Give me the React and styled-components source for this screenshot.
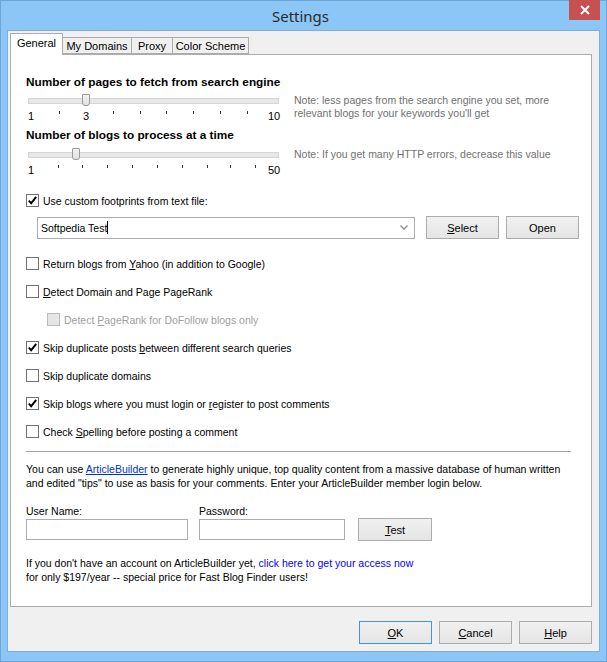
import React from 'react';
import styled, { createGlobalStyle } from 'styled-components';

const Global = createGlobalStyle`
  html, body { margin: 0; padding: 0; background: #fff; }
  body { font-family: "Liberation Sans", Arial, sans-serif; font-size: 10.5px; color: #000; }
  * { box-sizing: border-box; }
`;

const Window = styled.div`
  width: 607px;
  height: 662px;
  background: #8bc6f7;
  border: 1px solid #6ea5d8;
  display: flex;
  flex-direction: column;
`;

const TitleBar = styled.div`
  height: 29px;
  flex: none;
  display: grid;
  grid-template-columns: 1fr auto 1fr;
  align-items: start;
  padding-right: 6px;
`;

const Title = styled.div`
  grid-column: 2;
  font-family: "Noto Sans", "Open Sans", sans-serif;
  font-size: 15px;
  line-height: 30px;
  color: #2b2b2b;
`;

const CloseBtn = styled.div`
  grid-column: 3;
  justify-self: end;
  width: 31px;
  height: 20px;
  margin-top: -1px;
  background: #c75050;
  display: flex;
  align-items: center;
  justify-content: center;
`;

const Client = styled.div`
  flex: 1;
  margin: 0 6px 9px 6px;
  background: #f0f0f0;
  border: 1px solid #7eaedc;
  display: flex;
  flex-direction: column;
  padding: 2px 7px 0 2px;
`;

const TabStrip = styled.div`
  height: 21px;
  flex: none;
  display: flex;
  align-items: flex-end;
`;

const Tab = styled.div`
  position: relative;
  z-index: ${p => (p.$active ? 2 : 1)};
  width: ${p => p.$w}px;
  height: ${p => (p.$active ? 22 : 17)}px;
  margin-bottom: ${p => (p.$active ? -1 : 0)}px;
  margin-left: ${p => (p.$first ? 0 : -1)}px;
  background: ${p => (p.$active ? '#fff' : '#f0f0f0')};
  border: 1px solid #acacac;
  border-bottom: ${p => (p.$active ? 'none' : '1px solid #acacac')};
  display: flex;
  align-items: center;
  justify-content: center;
  padding-bottom: ${p => (p.$active ? 3 : 0)}px;
  font-size: 11px;
  white-space: nowrap;
`;

const Panel = styled.div`
  flex: 1;
  background: #fff;
  border: 1px solid #acacac;
  display: flex;
  flex-direction: column;
  padding: 0 8px 0 15px;
`;

const Heading = styled.div`
  font-weight: bold;
  font-size: 11.8px;
  line-height: 13px;
  margin-top: ${p => p.$mt}px;
`;

const SliderRow = styled.div`
  display: grid;
  grid-template-columns: 256px 1fr;
  column-gap: 12px;
  margin-top: ${p => p.$mt}px;
`;

const SliderBox = styled.div`
  display: flex;
  flex-direction: column;
`;

const TrackArea = styled.div`
  position: relative;
  height: 14px;
`;

const Track = styled.div`
  position: absolute;
  left: 2px;
  right: 3px;
  top: 5px;
  height: 6px;
  background: #e7e7e7;
  border: 1px solid #d6d6d6;
`;

const Thumb = styled.div`
  position: absolute;
  top: 1px;
  width: 8px;
  height: 12px;
  margin-left: -4px;
  background: linear-gradient(#f0f0f0, #e3e3e3);
  border: 1px solid #9a9a9a;
  border-radius: 1px 1px 3px 3px;
`;

const Scale = styled.div`
  position: relative;
  height: 12px;
  margin-top: 3px;
`;

const Tick = styled.div`
  position: absolute;
  top: 1px;
  width: 1px;
  height: 3px;
  background: #333;
`;

const ScaleLabel = styled.div`
  position: absolute;
  top: 0;
  font-size: 11px;
  line-height: 12px;
  transform: translateX(-50%);
`;

const Note = styled.div`
  color: #707070;
  line-height: 13px;
  padding-top: 1px;
`;

const CheckRow = styled.label`
  display: flex;
  align-items: center;
  height: 13px;
  margin-left: ${p => p.$indent || 0}px;
  color: ${p => (p.$disabled ? '#a0a0a0' : '#000')};
  margin-top: ${p => p.$mt || 0}px;
`;

const Box = styled.span`
  width: 13px;
  height: 13px;
  flex: none;
  border: 1px solid ${p => (p.$disabled ? '#bcbcbc' : '#707070')};
  background: ${p => (p.$disabled ? '#e6e6e6' : '#fff')};
  margin-right: 4px;
  display: flex;
  align-items: center;
  justify-content: center;
`;

const CheckList = styled.div`
  display: flex;
  flex-direction: column;
  gap: 15px;
  margin-top: 18px;
`;

const ComboRow = styled.div`
  display: flex;
  align-items: center;
  margin-top: 9px;
  margin-left: 11px;
  gap: 7px;
`;

const Combo = styled.div`
  width: 378px;
  height: 22px;
  flex: none;
  border: 1px solid #acacac;
  background: #fff;
  display: flex;
  align-items: center;
  padding: 0 6px 0 3px;
  margin-right: 4px;
`;

const ComboText = styled.span`
  flex: 1;
  display: flex;
  align-items: center;
`;

const Caret = styled.span`
  display: inline-block;
  width: 1px;
  height: 13px;
  background: #000;
`;

const Btn = styled.div`
  width: ${p => p.$w || 73}px;
  height: 23px;
  flex: none;
  border: 1px solid ${p => (p.$focused ? '#3d95e3' : '#acacac')};
  background: linear-gradient(#f0f0f0, #e5e5e5);
  display: flex;
  align-items: center;
  justify-content: center;
  font-size: 11px;
  margin-bottom: ${p => p.$mb || 0}px;
`;

const Separator = styled.div`
  height: 1px;
  background: #a0a0a0;
  margin: 13px 12px 0 0;
`;

const Para = styled.p`
  margin: ${p => p.$mt}px 0 0 0;
  line-height: 14px;
`;

const Link = styled.span`
  color: ${p => (p.$underline ? '#0033cc' : '#0000ff')};
  text-decoration: ${p => (p.$underline ? 'underline' : 'none')};
`;

const FieldsRow = styled.div`
  display: flex;
  align-items: flex-end;
  margin-top: 15px;
`;

const Field = styled.div`
  display: flex;
  flex-direction: column;
  gap: 1px;
  width: ${p => p.$w}px;
  margin-right: ${p => p.$mr}px;
`;

const FieldLabel = styled.div`
  line-height: 13px;
`;

const Input = styled.div`
  height: 21px;
  border: 1px solid #acacac;
  background: #fff;
`;

const ButtonRow = styled.div`
  flex: none;
  display: flex;
  justify-content: flex-end;
  gap: 7px;
  margin: 14px 0 7px 0;
`;

const Check = () => (
  <svg width="11" height="11" viewBox="0 0 11 11">
    <path d="M1.8 5.6 L4.2 8.2 L9.2 1.8" fill="none" stroke="#000" strokeWidth="1.9" />
  </svg>
);

const Checkbox = ({ checked, disabled, indent, mt, children }) => (
  <CheckRow $disabled={disabled} $indent={indent} $mt={mt}>
    <Box $disabled={disabled}>{checked && <Check />}</Box>
    <span>{children}</span>
  </CheckRow>
);

const Slider = ({ marks, thumb }) => (
  <SliderBox>
    <TrackArea>
      <Track />
      <Thumb style={{ left: thumb }} />
    </TrackArea>
    <Scale>
      {marks.map((m, i) =>
        m.label ? (
          <ScaleLabel key={i} style={{ left: m.pos }}>{m.label}</ScaleLabel>
        ) : (
          <Tick key={i} style={{ left: m.pos }} />
        )
      )}
    </Scale>
  </SliderBox>
);

const slider1 = [
  { pos: 5, label: '1' }, { pos: 33 }, { pos: 60, label: '3' }, { pos: 87 }, { pos: 114 },
  { pos: 140 }, { pos: 167 }, { pos: 194 }, { pos: 221 }, { pos: 248, label: '10' },
];
const slider2 = [
  { pos: 5, label: '1' }, { pos: 32 }, { pos: 56 }, { pos: 81 }, { pos: 106 }, { pos: 131 },
  { pos: 156 }, { pos: 181 }, { pos: 204 }, { pos: 229 }, { pos: 248, label: '50' },
];

export default function App() {
  return (
    <>
      <Global />
      <Window>
        <TitleBar>
          <Title>Settings</Title>
          <CloseBtn>
            <svg width="10" height="10" viewBox="0 0 10 10">
              <path d="M1 1 L9 9 M9 1 L1 9" stroke="#fff" strokeWidth="2" />
            </svg>
          </CloseBtn>
        </TitleBar>
        <Client>
          <TabStrip>
            <Tab $active $first $w={53}>General</Tab>
            <Tab $w={70}>My Domains</Tab>
            <Tab $w={42}>Proxy</Tab>
            <Tab $w={77}>Color Scheme</Tab>
          </TabStrip>
          <Panel>
            <Heading $mt={21}>Number of pages to fetch from search engine</Heading>
            <SliderRow $mt={4}>
              <Slider marks={slider1} thumb={60} />
              <Note>
                Note: less pages from the search engine you set, more<br />
                relevant blogs for your keywords you'll get
              </Note>
            </SliderRow>
            <Heading $mt={7}>Number of blogs to process at a time</Heading>
            <SliderRow $mt={5}>
              <Slider marks={slider2} thumb={50} />
              <Note>Note: If you get many HTTP errors, decrease this value</Note>
            </SliderRow>
            <Checkbox checked mt={18}>Use custom footprints from text file:</Checkbox>
            <ComboRow>
              <Combo>
                <ComboText>Softpedia Test<Caret /></ComboText>
                <svg width="8" height="5" viewBox="0 0 8 5">
                  <path d="M0.5 0.5 L4 4 L7.5 0.5" fill="none" stroke="#8a8a8a" strokeWidth="1.3" />
                </svg>
              </Combo>
              <Btn><span><u>S</u>elect</span></Btn>
              <Btn>Open</Btn>
            </ComboRow>
            <CheckList>
              <Checkbox>Return blogs from <u>Y</u>ahoo (in addition to Google)</Checkbox>
              <Checkbox><u>D</u>etect Domain and Page PageRank</Checkbox>
              <Checkbox disabled indent={21}>Detect <u>P</u>ageRank for DoFollow blogs only</Checkbox>
              <Checkbox checked>Skip duplicate posts <u>b</u>etween different search queries</Checkbox>
              <Checkbox>Skip duplicate domains</Checkbox>
              <Checkbox checked>Skip blogs where you must login or <u>r</u>egister to post comments</Checkbox>
              <Checkbox>Check <u>S</u>pelling before posting a comment</Checkbox>
            </CheckList>
            <Separator />
            <Para $mt={10}>
              You can use <Link $underline>ArticleBuilder</Link> to generate highly unique, top quality content from a massive database of human written<br />
              and edited "tips" to use as basis for your comments. Enter your ArticleBuilder member login below.
            </Para>
            <FieldsRow>
              <Field $w={162} $mr={11}>
                <FieldLabel>User Name:</FieldLabel>
                <Input />
              </Field>
              <Field $w={146} $mr={13}>
                <FieldLabel>Password:</FieldLabel>
                <Input />
              </Field>
              <Btn $w={74} $mb={-1}><span><u>T</u>est</span></Btn>
            </FieldsRow>
            <Para $mt={16}>
              If you don't have an account on ArticleBuilder yet, <Link>click here to get your access now</Link><br />
              for only $197/year -- special price for Fast Blog Finder users!
            </Para>
          </Panel>
          <ButtonRow>
            <Btn $focused><span><u>O</u>K</span></Btn>
            <Btn><span><u>C</u>ancel</span></Btn>
            <Btn><span><u>H</u>elp</span></Btn>
          </ButtonRow>
        </Client>
      </Window>
    </>
  );
}
